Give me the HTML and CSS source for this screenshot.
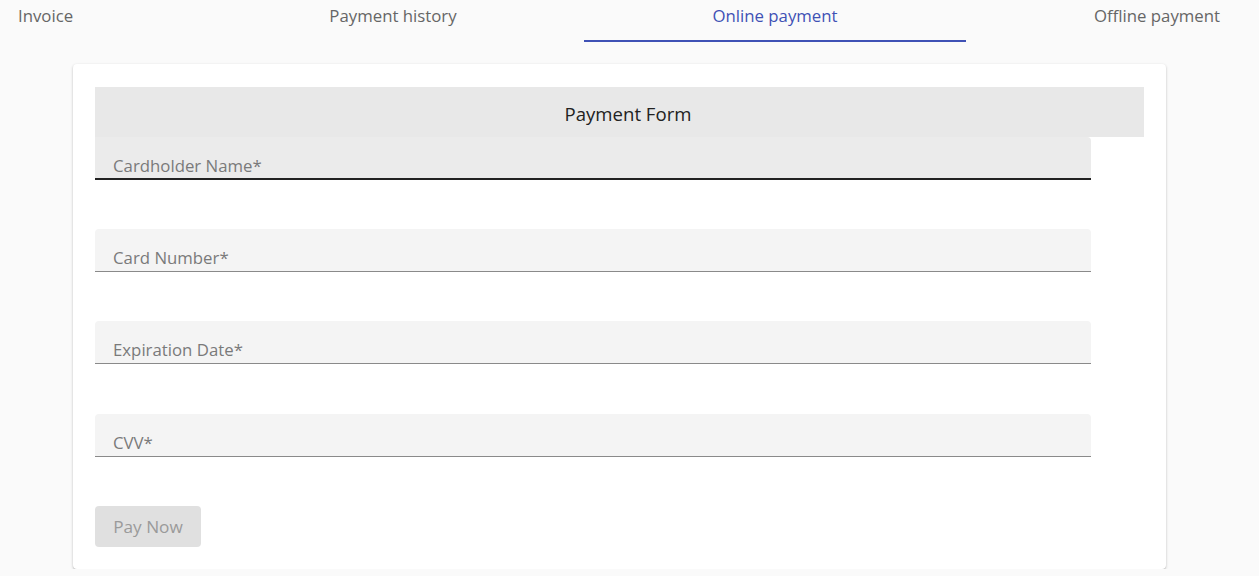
FILE: index.html
```html
<!DOCTYPE html>
<html>
<head>
<meta charset="utf-8">
<link rel="stylesheet" href="styles.css">
</head>
<body>
<nav class="tabs">
  <div class="tab tab-first">Invoice</div>
  <div class="tab">Payment history</div>
  <div class="tab tab-active">Online payment</div>
  <div class="tab">Offline payment</div>
</nav>
<main class="card">
  <div class="card-title">Payment Form</div>
  <form class="form">
    <div class="field field-focus"><span class="label">Cardholder Name*</span></div>
    <div class="field"><span class="label">Card Number*</span></div>
    <div class="field"><span class="label">Expiration Date*</span></div>
    <div class="field"><span class="label">CVV*</span></div>
    <div class="actions"><button type="button" class="btn" disabled>Pay Now</button></div>
  </form>
</main>
</body>
</html>
```
FILE: styles.css
```css
html, body {
  margin: 0;
  padding: 0;
  background: #fafafa;
  font-family: "Open Sans", "Noto Sans", sans-serif;
  overflow: hidden;
}
.tabs {
  display: flex;
  height: 42px;
  overflow: hidden;
  white-space: nowrap;
}
.tab {
  flex: 0 0 382px;
  display: flex;
  justify-content: center;
  padding-top: 5px;
  font-size: 16.8px;
  line-height: 22px;
  color: #666;
  box-sizing: border-box;
}
.tab-first {
  flex: 0 0 202px;
  justify-content: flex-start;
  padding-left: 18px;
}
.tab-active {
  color: #3f51b5;
  border-bottom: 2px solid #3f51b5;
  height: 42px;
}
.card {
  margin: 22px 93px 0 73px;
  background: #fff;
  border-radius: 4px;
  box-shadow: 0 1px 3px rgba(0,0,0,0.2), 0 1px 1px rgba(0,0,0,0.12);
  padding: 23px 22px 22px 22px;
  height: 505px;
  box-sizing: border-box;
}
.card-title {
  height: 50px;
  background: #e8e8e8;
  display: flex;
  align-items: center;
  justify-content: center;
  padding: 2px 0 0 17px;
  box-sizing: border-box;
  font-size: 18.6px;
  color: #222;
}
.form {
  display: flex;
  flex-direction: column;
  gap: 49.2px;
  width: 996px;
}
.field {
  height: 43px;
  background: #f4f4f4;
  border-radius: 4px 4px 0 0;
  border-bottom: 1px solid #8a8a8a;
  box-sizing: border-box;
  padding: 18px 0 0 18px;
  font-size: 16.8px;
  color: #7a7a7a;
  line-height: 22px;
}
.field-focus {
  background: #ebebeb;
  border-bottom: 2px solid #222;
  border-radius: 0 4px 0 0;
}
.actions {
  display: flex;
}
.btn {
  width: 106px;
  height: 41px;
  border: 0;
  border-radius: 4px;
  background: #e0e0e0;
  color: #9a9a9a;
  font-family: inherit;
  font-size: 17.2px;
  padding: 0;
}
```
